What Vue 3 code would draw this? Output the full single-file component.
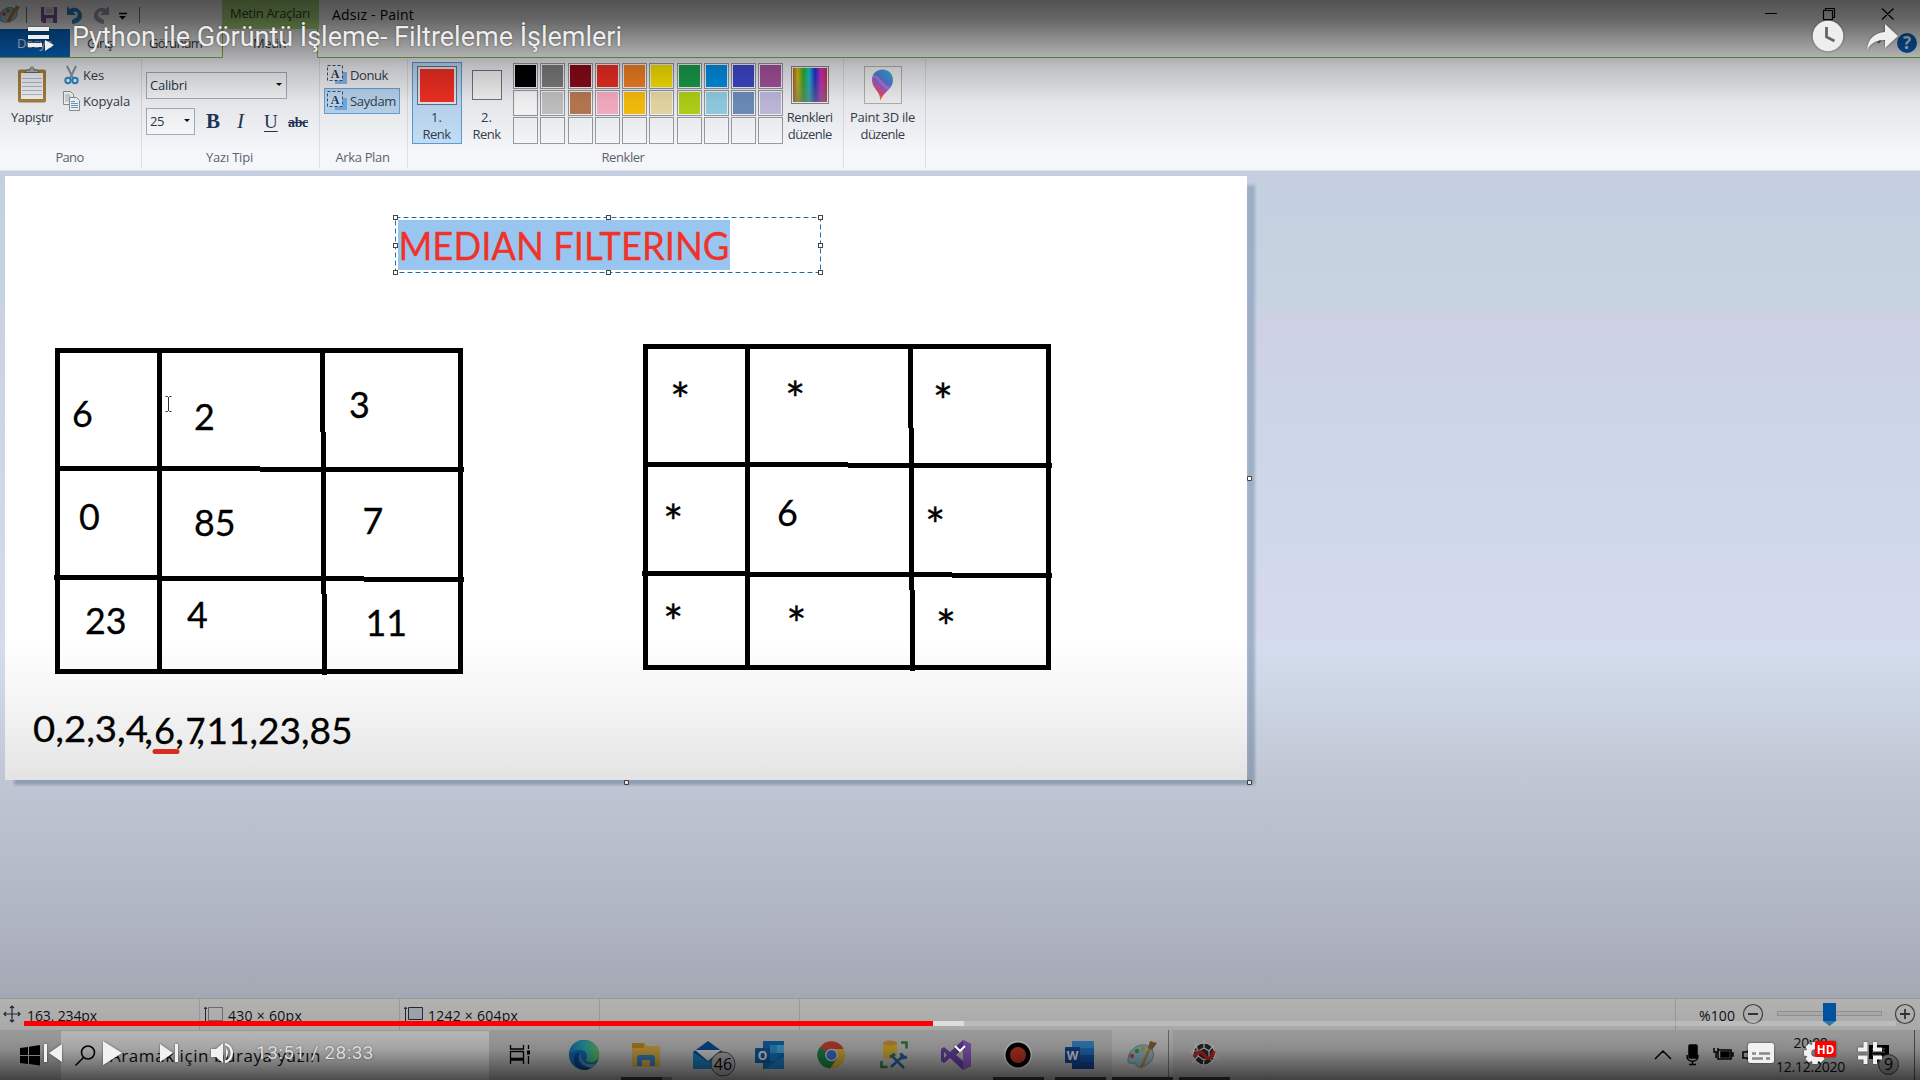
<script setup>
const swatches = [
  '#000000', '#7f7f7f', '#8c0a18', '#f22f24', '#f88323', '#fde800', '#18a04c', '#0093ea', '#3f4ad0', '#a9539f',
  '#ffffff', '#c8c8c8', '#be7c55', '#ffb2ca', '#ffc40e', '#efdfac', '#b5d819', '#95d4ea', '#6f92c2', '#c7bfe6',
  '', '', '', '', '', '', '', '', '', '',
]

const gridOffsets = [[0, 0], [588, -4]]

const leftDigits = [
  ['6', 72, 426.5], ['2', 194, 430], ['3', 349, 418],
  ['0', 79, 530], ['85', 194, 535.5], ['7', 362.5, 534],
  ['23', 85, 634], ['4', 187, 628], ['11', 365.5, 636],
]
const sequence = [
  ['0,2,3,4', 33, 741.5, 115], [',', 144, 743.5, 9], ['6', 154, 743.5, 21], [',', 175, 743.5, 9],
  ['7', 185.5, 743.5, 20], [',', 196, 743.5, 9], ['11,23,85', 206.5, 743.5, 146],
]
const stars = [
  [680.3, 389.7], [795.2, 388.5], [943, 390.7], [673.3, 511.7], [935.3, 514.5],
  [673.3, 611.7], [796.5, 614.3], [946, 617],
]
const handles = [[395, 217], [608, 217], [820, 217], [395, 245], [820, 245], [395, 272], [608, 272], [820, 272]]

// Spreads a label's letters so that it takes up the given width.
const vFit = {
  mounted(el, { value }) {
    const range = document.createRange()
    range.selectNodeContents(el)
    const width = range.getBoundingClientRect().width
    const spacing = (value - width) / el.textContent.length
    el.style.letterSpacing = spacing.toFixed(3) + 'px'
  },
}
</script>

<template>
  <div class="screen">
    <header class="titlebar">
      <svg class="quick" width="222" height="29" viewBox="0 0 222 29">
        <path d="M0 14C3 8 10 6 15 9c4 3 2 10-4 12-5 2-9 1-11-1z" fill="#a9cfe4" stroke="#6d8ea1" />
        <circle cx="4" cy="14" r="2" fill="#e45a45" /><circle cx="8" cy="11" r="2" fill="#5ab04f" />
        <path d="M8 22 15 9" stroke="#ca7b24" stroke-width="3" /><path d="m14 10 2-5 4 2-3 5z" fill="#c99058" />
        <path d="M26.500 7v16M139.500 7v16" stroke="#777" />
        <path d="M41 7h16v16H43l-2-2z" fill="#8052a5" /><path d="M44 7h10v8H44z" fill="#e6e0ee" /><path d="M46 18h7v5h-7z" fill="#ddd" /><path d="M46 10h6M46 12h6" stroke="#aaa" />
        <path d="M67 6v9h9l-3-3c4-2 6 2 4 5l-5 3v4c9-1 12-7 9-12-3-5-8-5-11-3z" fill="#2b87ca" />
        <path d="M109 6v9h-9l3-3c-4-2-6 2-4 5l5 3v4c-9-1-12-7-9-12 3-5 8-5 11-3z" fill="#a0a6b2" />
        <path d="M119 13.500h8" stroke="#000" stroke-width="1.500" /><path d="m119 16 3.500 3.500L126 16z" />
      </svg>
      <div class="context-tab"><span v-fit="80">Metin Araçları</span></div>
      <div class="doc-title"><span v-fit="82">Adsız - Paint</span></div>
      <svg class="window-buttons" width="150" height="29" viewBox="0 0 150 29" fill="none" stroke="#000" stroke-width="1.200">
        <path d="M0 13.500h12M58.500 10.500h9v9h-9zM60.500 10.500v-2h9v9h-2M117 8.500l11.500 11M128.500 8.500 117 19.500" />
      </svg>
    </header>

    <nav class="tabs">
      <div class="tab file"><span v-fit="35">Dosya</span></div>
      <div class="tab start"><span v-fit="26">Giriş</span></div>
      <div class="tab view"><span v-fit="53">Görünüm</span></div>
      <div class="tab active"><span v-fit="33">Metin</span></div>
      <div class="tab-rest">
        <svg width="50" height="24" viewBox="0 0 50 24">
          <path d="m8 14 5-5 5 5" fill="none" stroke="#555" stroke-width="1.500" />
          <circle cx="37" cy="14" r="10" fill="#0562bd" />
          <text x="37" y="20" text-anchor="middle" class="help">?</text>
        </svg>
      </div>
    </nav>

    <section class="ribbon">
      <div class="group pano">
        <div class="group-body">
          <div class="paste">
            <svg width="32" height="38" viewBox="0 0 32 38">
              <rect x="2" y="3.500" width="28" height="33" rx="2" fill="#b0803f" /><rect x="5" y="7" width="22" height="26" fill="#fafbfd" />
              <path d="M6 12.500h20M6 16.500h20M6 20.500h20M6 24.500h20M6 28.500h20" stroke="#b9bfc8" />
              <path d="M9 6.500h14l-2-2.500h-3c0-4-4-4-4 0h-3z" fill="#bbb" stroke="#666" />
            </svg>
            <span v-fit="42">Yapıştır</span>
          </div>
          <div class="clip-actions">
            <div class="action">
              <svg width="17" height="20" viewBox="0 0 17 20"><path d="m4 1 6 12M13 1 7 13" stroke="#8b98a5" stroke-width="2" /><g fill="none" stroke="#2c8ed0" stroke-width="2"><circle cx="5" cy="15.500" r="2.700" /><circle cx="12" cy="15.500" r="2.700" /></g></svg>
              <span v-fit="21">Kes</span>
            </div>
            <div class="action">
              <svg width="17" height="20" viewBox="0 0 17 20" fill="#fff" stroke="#8d949c"><path d="M.5.500h7l3 3v10H.5z" /><path d="M2 4h5M2 6h6M2 8h6M2 10h6" stroke="#a5b8cc" /><path d="M6.500 6.500h7l3 3v10h-10z" /><path d="M8 10.500h4M8 12.500h7M8 14.500h7M8 16.500h7" stroke="#6c9ed0" /></svg>
              <span v-fit="47">Kopyala</span>
            </div>
          </div>
        </div>
        <div class="caption"><span v-fit="28">Pano</span></div>
      </div>

      <div class="group font">
        <div class="group-body column">
          <div class="field family"><span v-fit="37">Calibri</span><i class="caret"></i></div>
          <div class="font-row">
            <div class="field size"><span v-fit="14">25</span><i class="caret"></i></div>
            <b class="bold">B</b><i class="italic">I</i><span class="under">U</span><span class="strike"><span v-fit="20">abc</span></span>
          </div>
        </div>
        <div class="caption"><span v-fit="47">Yazı Tipi</span></div>
      </div>

      <div class="group background">
        <div class="group-body column">
          <div v-for="(name, i) in ['Donuk', 'Saydam']" :key="name" class="choice" :class="{ chosen: i === 1 }">
            <svg width="21" height="20" viewBox="0 0 21 20">
              <path d="M8 7h12v12H8z" :fill="i ? '#72b1ee' : '#86baf0'" /><path d="M.5.500h15v15H.5z" :fill="i ? '#c7dff6' : '#f1f3f8'" stroke="#2d5680" stroke-dasharray="3 2" />
              <text x="8" y="12.500" text-anchor="middle" class="letter">A</text>
            </svg>
            <span v-fit="i ? 46 : 38">{{ name }}</span>
          </div>
        </div>
        <div class="caption"><span v-fit="54">Arka Plan</span></div>
      </div>

      <div class="group colours">
        <div class="group-body">
          <div class="slot primary"><i class="chip"></i><span>1.</span><span v-fit="28">Renk</span></div>
          <div class="slot secondary"><i class="chip"></i><span>2.</span><span v-fit="28">Renk</span></div>
          <div class="palette"><i v-for="(c, i) in swatches" :key="i" class="cell" :style="{ backgroundColor: c || 'transparent' }"></i></div>
          <div class="large edit">
            <i class="rainbow"></i><span v-fit="46">Renkleri</span><span v-fit="44">düzenle</span>
          </div>
        </div>
        <div class="caption"><span v-fit="43">Renkler</span></div>
      </div>

      <div class="group paint3d">
        <div class="large">
          <svg width="38" height="38" viewBox="0 0 38 38">
            <defs><linearGradient id="drop" x1="0.800" y1="0" x2="0.300" y2="1"><stop offset="0" stop-color="#29b9e7" /><stop offset=".4" stop-color="#5e79dc" /><stop offset=".6" stop-color="#b45bc6" /><stop offset=".8" stop-color="#ef4b62" /><stop offset="1" stop-color="#ffb300" /></linearGradient></defs>
            <rect x=".5" y=".5" width="37" height="37" fill="#f8f8f8" stroke="#b5b5b5" />
            <path d="M16 35C17 25 8 23 8 14 8 0 29 0 29 14c0 9-8 10-13 21z" fill="url(#drop)" />
            <path d="M9 10c7 0 8 11 16 12" fill="none" stroke="#c38be8" stroke-width="3" opacity=".6" />
          </svg>
          <span v-fit="65">Paint 3D ile</span><span v-fit="44">düzenle</span>
        </div>
      </div>
    </section>

    <main class="workspace">
      <svg class="drawing" width="1260" height="620" viewBox="0 171 1260 620">
        <path d="M14 780.500h1236.500V185" fill="none" stroke="#8fa3bd" stroke-width="9" class="canvas-shadow" />
        <rect x="5" y="176" width="1242" height="604" fill="#fff" />
        <rect x="398" y="220" width="332" height="50" fill="#99c6f1" />
        <text x="398.500" y="260" class="ink heading" textLength="331" lengthAdjust="spacingAndGlyphs">MEDIAN FILTERING</text>
        <rect x="395.500" y="217.500" width="425" height="55" fill="none" stroke="#1d6fb0" stroke-dasharray="5 3" />
        <rect v-for="(h, i) in handles" :key="'h' + i" :x="h[0] - 1.500" :y="h[1] - 1.500" width="4" height="4" fill="#fff" stroke="#444" />
        <g v-for="(o, i) in gridOffsets" :key="'g' + i" :transform="`translate(${o[0]} ${o[1]})`">
          <path d="M55 348h408v326H55zM60 353v316h398V353z" fill-rule="evenodd" />
          <path d="M157 350h5v322h-5zM320 350h5v82h1v162h1v81h-5v-81h-1V432h-1z" />
          <path d="M60 466h200v1h204v5H260v-1H60zM54 575h106v1h204v1h100v5H364v-1H160v-1H54z" />
        </g>
        <text v-for="d in leftDigits" :key="d[0]" :x="d[1]" :y="d[2]" :textLength="d[0].length * 20.8" lengthAdjust="spacingAndGlyphs" class="ink">{{ d[0] }}</text>
        <text x="777" y="525.500" textLength="20.800" lengthAdjust="spacingAndGlyphs" class="ink">6</text>
        <text v-for="(s, i) in sequence" :key="'s' + i" :x="s[1]" :y="s[2]" :textLength="s[3]" lengthAdjust="spacingAndGlyphs" class="ink">{{ s[0] }}</text>
        <text v-for="(s, i) in stars" :key="'a' + i" :x="s[0]" :y="s[1] + 28" class="ink star" text-anchor="middle">*</text>
        <path d="M155 751.500h22" stroke="#ed3024" stroke-width="5" stroke-linecap="round" />
        <path d="M165.500 396.500h2l1 1 1-1h2M168.500 397v14M165.500 411.500h2l1-1 1 1h2" fill="none" stroke="#333" />
        <g fill="#fff" stroke="#444"><path d="M1247.500 476.500h4v4h-4zM624.500 780.500h4v4h-4zM1247.500 780.500h4v4h-4z" /></g>
      </svg>
    </main>

    <footer class="statusbar">
      <div class="stat s1">
        <svg width="18" height="18" viewBox="0 0 18 18"><path d="M9 1v16M1 9h16M7 3l2-2 2 2M7 15l2 2 2-2M3 7 1 9l2 2M15 7l2 2-2 2" fill="none" stroke="#26394f" stroke-width="1.200" /></svg>
        <span v-fit="70">163, 234px</span>
      </div>
      <div class="stat">
        <svg width="20" height="16" viewBox="0 0 20 16"><path d="M1.500 2v13M0 3l1.500-2L3 3" fill="none" stroke="#26394f" /><path d="M4.500 1.500h14v13h-14z" fill="none" stroke="#26394f" stroke-dasharray="1 1" /></svg>
        <span v-fit="74">430 × 60px</span>
      </div>
      <div class="stat">
        <svg width="20" height="16" viewBox="0 0 20 16"><path d="M1.500 2v13M0 3l1.500-2L3 3" fill="none" stroke="#26394f" /><path d="M4.500 1.500h14v12h-14z" fill="#d7dee8" stroke="#26394f" /></svg>
        <span v-fit="90">1242 × 604px</span>
      </div>
      <div class="stat"></div>
      <div class="stat wide"></div>
      <div class="zoom">
        <span v-fit="36">%100</span>
        <svg width="175" height="32" viewBox="0 0 175 32">
          <g fill="none" stroke="#555" stroke-width="1.200"><circle cx="12" cy="15" r="9.500" /><circle cx="164" cy="15" r="9.500" /></g>
          <path d="M7 15h10M159 15h10M164 10v10" stroke="#444" stroke-width="1.800" />
          <rect x="36.500" y="12.500" width="104" height="4" fill="#e8e8e8" stroke="#c6c6c6" />
          <path d="M82 4h13v18l-6.500 5-6.500-5z" fill="#0071d8" />
        </svg>
      </div>
    </footer>

    <footer class="taskbar">
      <svg class="start-icon" width="22" height="22" viewBox="0 0 22 22"><path d="M1 4l8-1v8H1zM10 2.800 21 1v10H10zM1 12h8v8l-8-1zM10 12h11v9.500l-11-1.500z" /></svg>
      <div class="search">
        <svg width="24" height="24" viewBox="0 0 24 24" fill="none" stroke="#000" stroke-width="1.600"><circle cx="14" cy="8.500" r="6.500" /><path d="m9.500 13.500-8 8" /></svg>
        <span v-fit="211">Aramak için buraya yazın</span>
      </div>
      <svg class="apps" width="750" height="50" viewBox="489 1030 750 50">
        <defs>
          <linearGradient id="edge" x1="0" y1="0" x2="1" y2="0"><stop offset="0" stop-color="#1685d0" /><stop offset=".55" stop-color="#2fc1c4" /><stop offset="1" stop-color="#72da58" /></linearGradient>
        </defs>
        <path d="M1112 1030h56v50h-56z" fill="#fff" opacity=".45" /><path d="M1169 1030h4v50h-4z" fill="#fff" opacity=".35" />
        <path d="M1168.500 1030v50" stroke="#8c8c8c" />
        <path d="M510.500 1045v4h13v-4M510.500 1064v-4h13v4M510.500 1051.500h13v7h-13zM528.500 1045v4M528.500 1056v8" fill="none" stroke="#000" stroke-width="1.300" /><path d="M527 1050.500h3v4h-3z" />
        <circle cx="584" cy="1055" r="15" fill="#1474c8" />
        <path d="M569 1054c1-19 29-18 30 1 0 8-11 9-13 5 3-6-1-10-6-10-5 0-8 2-11 4z" fill="url(#edge)" />
        <path d="M580 1052c-5 6 0 18 12 15-9 8-20-1-18-9 1-4 3-5 6-6z" fill="#0a4b9a" /><path d="M581 1053c-2 8 6 14 15 10l-4 5c-9-1-15-9-11-15z" fill="#a9b4bf" opacity=".65" />
        <path d="M632 1043h12l3 3h13v21h-28z" fill="#f2c04d" /><path d="M632 1043h12v5h-12z" fill="#d99b20" /><path d="M637 1066v-8q0-3 3-3h12q3 0 3 3v8h-5v-6h-8v6z" fill="#3f8fd8" />
        <path d="m693 1052 15-11 15 11v17h-30z" fill="#0a57ac" /><path d="M695 1050h26l-13 11z" fill="#f5f5f5" /><path d="m693 1052 15 10 15-10v17h-30z" fill="#1d90d5" />
        <circle cx="723" cy="1064" r="12" fill="#c4c4c4" stroke="#555" /><text x="723" y="1069.500" text-anchor="middle" class="badge">46</text>
        <path d="M763 1041h21v28h-21z" fill="#1672c6" /><path d="M770 1045h7v8h-7z" fill="#31a6ed" /><path d="M777 1045h7v8h-7z" fill="#51bff5" /><path d="M770 1053h7v8h-7z" fill="#1684d6" /><path d="m763 1069 21-12v12z" fill="#238fdf" /><rect x="755" y="1048" width="15" height="15" rx="1" fill="#1265b4" /><text x="762.500" y="1060" text-anchor="middle" class="office">O</text>
        <circle cx="831.500" cy="1055" r="13.500" fill="#f2c63b" /><path d="M831.500 1055 820 1047.500a13.500 13.500 0 0 1 23.500 1.500h-12z" fill="#df4a3b" /><path d="m831.500 1055-11.500-8a13.500 13.500 0 0 0 10 21.500l7-10z" fill="#219454" /><circle cx="831.500" cy="1055" r="6.300" fill="#e6e9ee" /><circle cx="831.500" cy="1055" r="5" fill="#3f7de0" />
        <path d="M883 1043q7-4 14 0v14q-7 4-14 0z" fill="#f5c935" /><ellipse cx="890" cy="1043" rx="7" ry="2.500" fill="#e6a44d" /><path d="M901 1042.500h5.500v6M881.500 1061v6h6" fill="none" stroke="#3a8c45" stroke-width="2.500" /><path d="m891 1067 13-12M892 1056l12 12" stroke="#246fae" stroke-width="2.500" /><path d="m890 1057 5-3M901 1053l1 5 5-1" fill="none" stroke="#246fae" stroke-width="3" />
        <path d="m963 1040 8 4v22l-8 4-13-12-6 5-3-2v-12l3-2 6 5zM944 1052v6l3-3zM963 1049l-7 6 7 6z" fill="#7a4bc0" fill-rule="evenodd" /><path d="m963 1040 8 4v22l-8 4z" fill="#a169e0" />
        <circle cx="1018" cy="1055" r="14" fill="#fff" /><circle cx="1018" cy="1055" r="12.500" fill="#000" /><circle cx="1018" cy="1055" r="8" fill="#d83c2b" />
        <path d="M1072 1041h22v28h-22z" fill="#155bbd" /><path d="M1072 1041h22v7h-22z" fill="#3f9de8" /><path d="M1072 1048h22v7h-22z" fill="#2580d6" /><path d="M1072 1062h22v7h-22z" fill="#144ba0" /><rect x="1065" y="1047" width="15" height="16" rx="1" fill="#164da4" /><text x="1072.500" y="1059.500" text-anchor="middle" class="office">W</text>
        <path d="M1128 1060c0-11 13-19 22-13 8 7 1 19-10 20-5 0-3-4-7-4-4 1-5 0-5-3z" fill="#a4d4e8" stroke="#6f9db3" /><circle cx="1132" cy="1056" r="2.300" fill="#e45b3f" /><circle cx="1137" cy="1051" r="2.300" fill="#4cae45" /><circle cx="1143" cy="1049" r="2.300" fill="#e8b534" /><path d="m1141 1068 9-20" stroke="#dc963c" stroke-width="2.800" /><path d="m1148 1048 2-7 7 2-5 7z" fill="#9f6d3c" />
        <g stroke="#f4f4f4" stroke-width="1.200"><circle cx="1204" cy="1054" r="11" fill="#303030" /><path d="M1204 1040v8l5 3 5-6M1209 1051v6l-5 3-6-4v-5l6-3M1190 1051l8 0M1209 1057l9 1M1198 1056l-6 7M1204 1060l-1 8M1209 1057l4 6M1195 1043l3 8" fill="none" /></g><path d="M1194 1057c4-7 7-6 11-1s7 1 9-5" fill="none" stroke="#dd2725" stroke-width="3.500" />
        <path d="M621 1077h41v3h-41zM993 1077h51v3h-51zM1055 1077h51v3h-51zM1112 1077h61v3h-61zM1179 1077h51v3h-51z" fill="#444" /><path d="M662 1077h10v3h-10z" fill="#999" />
      </svg>
      <div class="tray">
        <svg width="128" height="30" viewBox="1650 1040 128 30" fill="none" stroke="#000" stroke-width="1.500">
          <path d="m1655 1059 8-8 8 8M1687 1055v1c0 7 11 7 11 0v-1M1692.500 1061v3M1689 1064.500h7" /><rect x="1689" y="1045" width="8" height="13" rx="1" fill="#000" />
          <path d="M1718 1050h13v9h-13zM1731 1053h2v3h-2M1714 1048v4h4v-4M1716 1052v6" /><path d="M1721 1052h8v5h-8z" fill="#000" /><path d="M1743 1052h4l4-4v14l-4-4h-4zM1755 1051q3 4 0 8M1759 1048q5 7 0 14" />
        </svg>
        <div class="clock"><span v-fit="34">20:08</span><span v-fit="69">12.12.2020</span></div>
        <svg width="60" height="50" viewBox="1860 1030 60 50">
          <path d="M1869 1045h20v14h-8l-4 4v-4h-8z" /><path d="M1872 1049h13M1872 1052h13M1872 1055h9" stroke="#aaa" />
          <circle cx="1888.500" cy="1064.500" r="10" fill="#aaa" stroke="#444" /><text x="1888.500" y="1070" text-anchor="middle" class="badge">9</text>
          <path d="M1914.500 1030v50" stroke="#666" />
        </svg>
      </div>
    </footer>

    <div class="shade top"></div>
    <div class="shade bottom"></div>

    <div class="player-top">
      <svg width="30" height="28" viewBox="0 0 30 28" fill="#eee"><path d="M2 2h21v4H2zM2 10h21v4H2zM2 18h14v4H2zM19 15l9 5-9 6z" /></svg>
      <span class="video-title" v-fit="550">Python ile Görüntü İşleme- Filtreleme İşlemleri</span>
      <svg class="top-actions" width="90" height="34" viewBox="1810 19 90 34">
        <circle cx="1828" cy="36" r="15.300" fill="#eee" /><path d="M1826.500 27v10l8 4" fill="none" stroke="#666" stroke-width="2.800" />
        <path d="M1885 24l13 12-13 12v-8c-9 0-14 3-18 10 1-12 8-17 18-18z" fill="#eee" />
      </svg>
    </div>
    <div class="progress"><i class="played"></i><i class="loaded"></i></div>
    <div class="player-bottom">
      <svg width="196" height="32" viewBox="40 1037 196 32" fill="#f1f1f1">
        <path d="M44 1044h3v18h-3zM62 1044v18l-13-9zM103 1041l19 12-19 12zM160 1044l13 9-13 9zM175 1044h3v18h-3zM211 1049h5l7-6v20l-7-6h-5z" />
        <path d="M226 1048q4 5 0 10z" /><path d="M225 1044c9 2 9 16 0 18" fill="none" stroke="#f1f1f1" stroke-width="2.500" />
      </svg>
      <span class="time" v-fit="118">13:51 / 28:33</span>
      <svg class="chapters" width="16" height="12" viewBox="0 0 16 12"><path d="m3 4 5 5 5-5" fill="none" stroke="#fff" stroke-width="2.200" /></svg>
      <svg class="player-right" width="140" height="32" viewBox="1746 1037 140 32" fill="#f1f1f1">
        <rect x="1748" y="1043" width="26" height="20" rx="2.500" /><path d="M1752 1053.500h4M1759 1053.500h11M1752 1058.500h11M1766 1058.500h4" stroke="#888" stroke-width="2.500" />
        <g transform="translate(1815 1053)"><path v-for="a in 8" :key="a" d="M-2.500-11h5l1 5h-7z" :transform="`rotate(${a * 45})`" /><circle r="6.300" fill="none" stroke="#f1f1f1" stroke-width="5" /></g>
        <rect x="1815" y="1041" width="21" height="16" rx="1.500" fill="#f00" /><text x="1825.500" y="1053.500" text-anchor="middle" class="hd">HD</text>
        <path d="M1863.500 1042h4v9.500h-9.500v-4h5.500zM1873 1042h4v5.500h5v4h-9zM1858 1055.500h9.500v8.500h-4v-4.500h-5.500zM1873 1055.500h9v4h-5v4.500h-4z" />
      </svg>
    </div>
  </div>
</template>

<style>
body { margin: 0; overflow: hidden; }
</style>

<style scoped>
.screen { position: relative; width: 1920px; height: 1080px; overflow: hidden; display: flex; flex-direction: column; font-family: "Open Sans", "Noto Sans", sans-serif; font-size: 13px; color: #333e4c; white-space: nowrap; }
.screen * { box-sizing: border-box; }
svg { display: block; flex: none; }
i { font-style: normal; }
.titlebar { height: 29px; flex: none; display: flex; background: #fff; }
.context-tab { width: 97px; padding-left: 8px; background: #aede80; color: #2b421b; line-height: 27px; }
.doc-title { flex: 1; padding-left: 13px; line-height: 30px; color: #000; font-size: 14px; }
.window-buttons { margin-right: 5px; }
.tabs { height: 29px; flex: none; display: flex; background: #fff; }
.tab { border-bottom: 1px solid #77bb45; line-height: 29px; height: 29px; }
.file { width: 70px; padding-left: 17px; background: #0868c7; color: #e6eef8; }
.start { width: 62px; padding-left: 17px; }
.view { width: 91px; padding-left: 17px; border-right: 1px solid #77bb45; }
.active { width: 94px; padding-left: 30px; border-bottom: 0; background: #f8f8fa; }
.tab-rest { flex: 1; display: flex; justify-content: flex-end; border-left: 1px solid #77bb45; border-bottom: 1px solid #77bb45; }
.help { font: 700 17px "Open Sans", sans-serif; fill: #e8f2ff; }

.ribbon { height: 113px; flex: none; display: flex; background: #f5f6fa; border-bottom: 1px solid #dfe2ea; }
.group { display: flex; flex-direction: column; height: 109px; margin-top: 1px; border-right: 1px solid #dcdee4; }
.group-body { display: flex; height: 89px; }
.column { flex-direction: column; }
.caption { text-align: center; line-height: 22px; padding-top: 2px; margin-left: -2px; color: #5d636d; }
.pano { width: 142px; }
.font { width: 178px; }
.background { width: 88px; }
.colours { width: 436px; }
.colours .caption { margin-left: -5px; }
.paint3d { width: 82px; }
.paste { width: 63px; padding: 7px 0 0 1px; display: flex; flex-direction: column; align-items: center; line-height: 17px; gap: 5px; }
.clip-actions { padding-top: 6px; display: flex; flex-direction: column; gap: 6px; }
.action { display: flex; align-items: center; gap: 3px; height: 20px; }
.field { display: flex; align-items: center; justify-content: space-between; border: 1px solid #a5afc4; background: #fafbfd; padding: 0 4px 2px 3px; color: #26364b; }
.family { width: 141px; height: 27px; margin: 13px 0 9px 4px; }
.size { width: 49px; height: 27px; }
.caret { border: 3.500px solid transparent; border-top-color: #111; border-bottom: 0; }
.font-row { display: flex; align-items: center; margin-left: 4px; color: #1f3558; font-family: "Liberation Serif", serif; font-size: 21px; }
.size { font-family: "Open Sans", sans-serif; font-size: 13px; }
.bold { margin-left: 11px; width: 31px; }
.italic { font-style: italic; width: 27px; }
.under { text-decoration: underline; text-underline-offset: 3px; width: 24px; font-size: 19px; }
.strike { font: 700 14px "Liberation Serif", serif; text-decoration: line-through; padding-top: 3px; }
.choice { height: 26px; width: 76px; margin: 1px 0 0 4px; padding-left: 2px; display: flex; align-items: center; gap: 2px; border: 1px solid transparent; }
.background .group-body { padding-top: 2px; }
.chosen { margin-top: 0; background: #bed9f5; border-color: #6ba5d9; }
.letter { font: 700 12px "Liberation Serif", serif; fill: #1c3b61; }
.slot { display: flex; flex-direction: column; align-items: center; height: 82px; line-height: 17px; margin-top: 3px; width: 50px; }
.primary { margin-left: 4px; background: #c3def9; border: 1px solid #5b9cd4; padding-right: 1px; }
.primary .chip { width: 40px; height: 40px; margin: 3px 0 4px; background: #f83024; border: 1px solid #667385; box-shadow: inset 0 0 0 2px #e5ecf4; }
.secondary { padding-right: 1px; }
.secondary .chip { width: 30px; height: 30px; margin: 8px 0 9px; border: 1px solid #777; background: #fbfbfb; }
.palette { display: grid; grid-template-columns: repeat(10, 25px); column-gap: 2.250px; grid-template-rows: 26px 26px 27px; row-gap: 1px; margin: 4px 0 0 1px; height: 81px; }
.cell { border: 1px solid #979aa2; box-shadow: inset 0 0 0 1px #fafafa; }
.large { display: flex; flex-direction: column; align-items: center; line-height: 17px; width: 53px; padding-top: 7px; }
.edit { margin-left: 0; }
.rainbow { width: 38px; height: 38px; margin-bottom: 5px; border: 1px solid #888; box-shadow: inset 0 0 0 1px #f5f5f5; background: linear-gradient(0deg, #7779, transparent 75%), linear-gradient(90deg, #c44a20, #d6c315 16%, #32b52c 32%, #19c9de 48%, #272ed0 64%, #cd2fd1 80%, #d12f35); }
.paint3d .large { width: 77px; }
.paint3d svg { margin-bottom: 5px; }

.workspace { flex: 1; min-height: 0; background: linear-gradient(#c6cde1, #c4cfdf 1.500%, #c8d3e2 16%, #cdd1e3 18%, #cdd3e5 24%, #ccd5e5 27%, #d0d9e9 46%, #d3d8eb 48%, #d5d9ec 56%, #d5deee 58%, #d4ddec 66%, #d8deee 75%, #dbe2f1); }
.canvas-shadow { filter: blur(1.500px); opacity: .75; }
.ink { font: 400 37.500px Lato, sans-serif; fill: #000; stroke: #000; stroke-width: .3px; }
.heading { fill: #f03228; stroke: #f03228; font-size: 38px; }
.star { font-size: 48px; }

.statusbar { height: 32px; flex: none; display: flex; background: #f0efee; border-top: 1px solid #cfcfd2; color: #10151d; font-size: 14px; }
.stat { width: 200px; border-right: 1px solid #cfcfcf; display: flex; align-items: center; padding: 0 0 2px 4px; gap: 4px; }
.stat span { padding-top: 3px; }
.stat.s1 { padding-left: 3px; gap: 6px; width: 200px; }
.wide { width: 876px; }
.zoom { display: flex; padding-left: 23px; gap: 6px; line-height: 34px; font-size: 14px; }
.taskbar { height: 50px; flex: none; display: flex; background: #d9d9d9; color: #111; }
.start-icon { margin: 14px 20px 0 19px; }
.search { width: 428px; height: 49px; margin-top: 1px; background: #fff; display: flex; align-items: center; padding-left: 13px; gap: 12px; font-size: 17px; }
.badge { font: 16px "Open Sans", sans-serif; fill: #000; }
.office { font: 700 12px "Open Sans", sans-serif; fill: #fff; }
.tray { margin-left: auto; display: flex; align-items: center; }
.clock { width: 82px; display: flex; flex-direction: column; align-items: center; line-height: 24px; padding-right: 17px; font-size: 14px; }

.shade { position: absolute; left: 0; width: 100%; pointer-events: none; }
.shade.top { top: 0; height: 150px; background: linear-gradient(rgba(0,0,0,.68), rgba(0,0,0,.6) 13%, rgba(0,0,0,.34) 35%, rgba(0,0,0,.22) 45%, rgba(0,0,0,.07) 68%, transparent); }
.shade.bottom { top: 640px; height: 440px; background: linear-gradient(transparent, rgba(0,0,0,.05) 17%, rgba(0,0,0,.11) 32%, rgba(0,0,0,.2) 65%, rgba(0,0,0,.26) 82%, rgba(0,0,0,.3) 90%, rgba(0,0,0,.36) 93%, rgba(0,0,0,.5) 96%, rgba(0,0,0,.7)); }
.player-top { position: absolute; top: 19px; left: 26px; width: 1894px; display: flex; color: #eee; }
.player-top svg, .player-bottom svg { filter: drop-shadow(0 0 1px rgba(0,0,0,.5)); }
.player-top svg:first-child { margin-top: 6px; }
.video-title { margin-left: 16px; font: 27px/34px Roboto, sans-serif; padding-top: 1px; text-shadow: 0 0 2px rgba(0,0,0,.5); }
.top-actions { margin-left: auto; margin-right: 20px; }
.progress { position: absolute; top: 1021px; left: 24px; width: 1872px; height: 5px; display: flex; background: rgba(255,255,255,.2); }
.played { width: 909px; background: #f00; }
.loaded { width: 31px; background: rgba(255,255,255,.5); }
.player-bottom { position: absolute; top: 1037px; left: 40px; width: 1846px; display: flex; color: #ddd; }
.time { width: 118px; flex: none; margin-left: 20px; font: 19px/32px Roboto, sans-serif; text-shadow: 0 0 2px rgba(0,0,0,.5); }
.chapters { margin: 5px 0 0 578px; }
.player-right { margin-left: auto; }
.hd { font: 700 11.500px "Open Sans", sans-serif; fill: #fff; }
</style>
